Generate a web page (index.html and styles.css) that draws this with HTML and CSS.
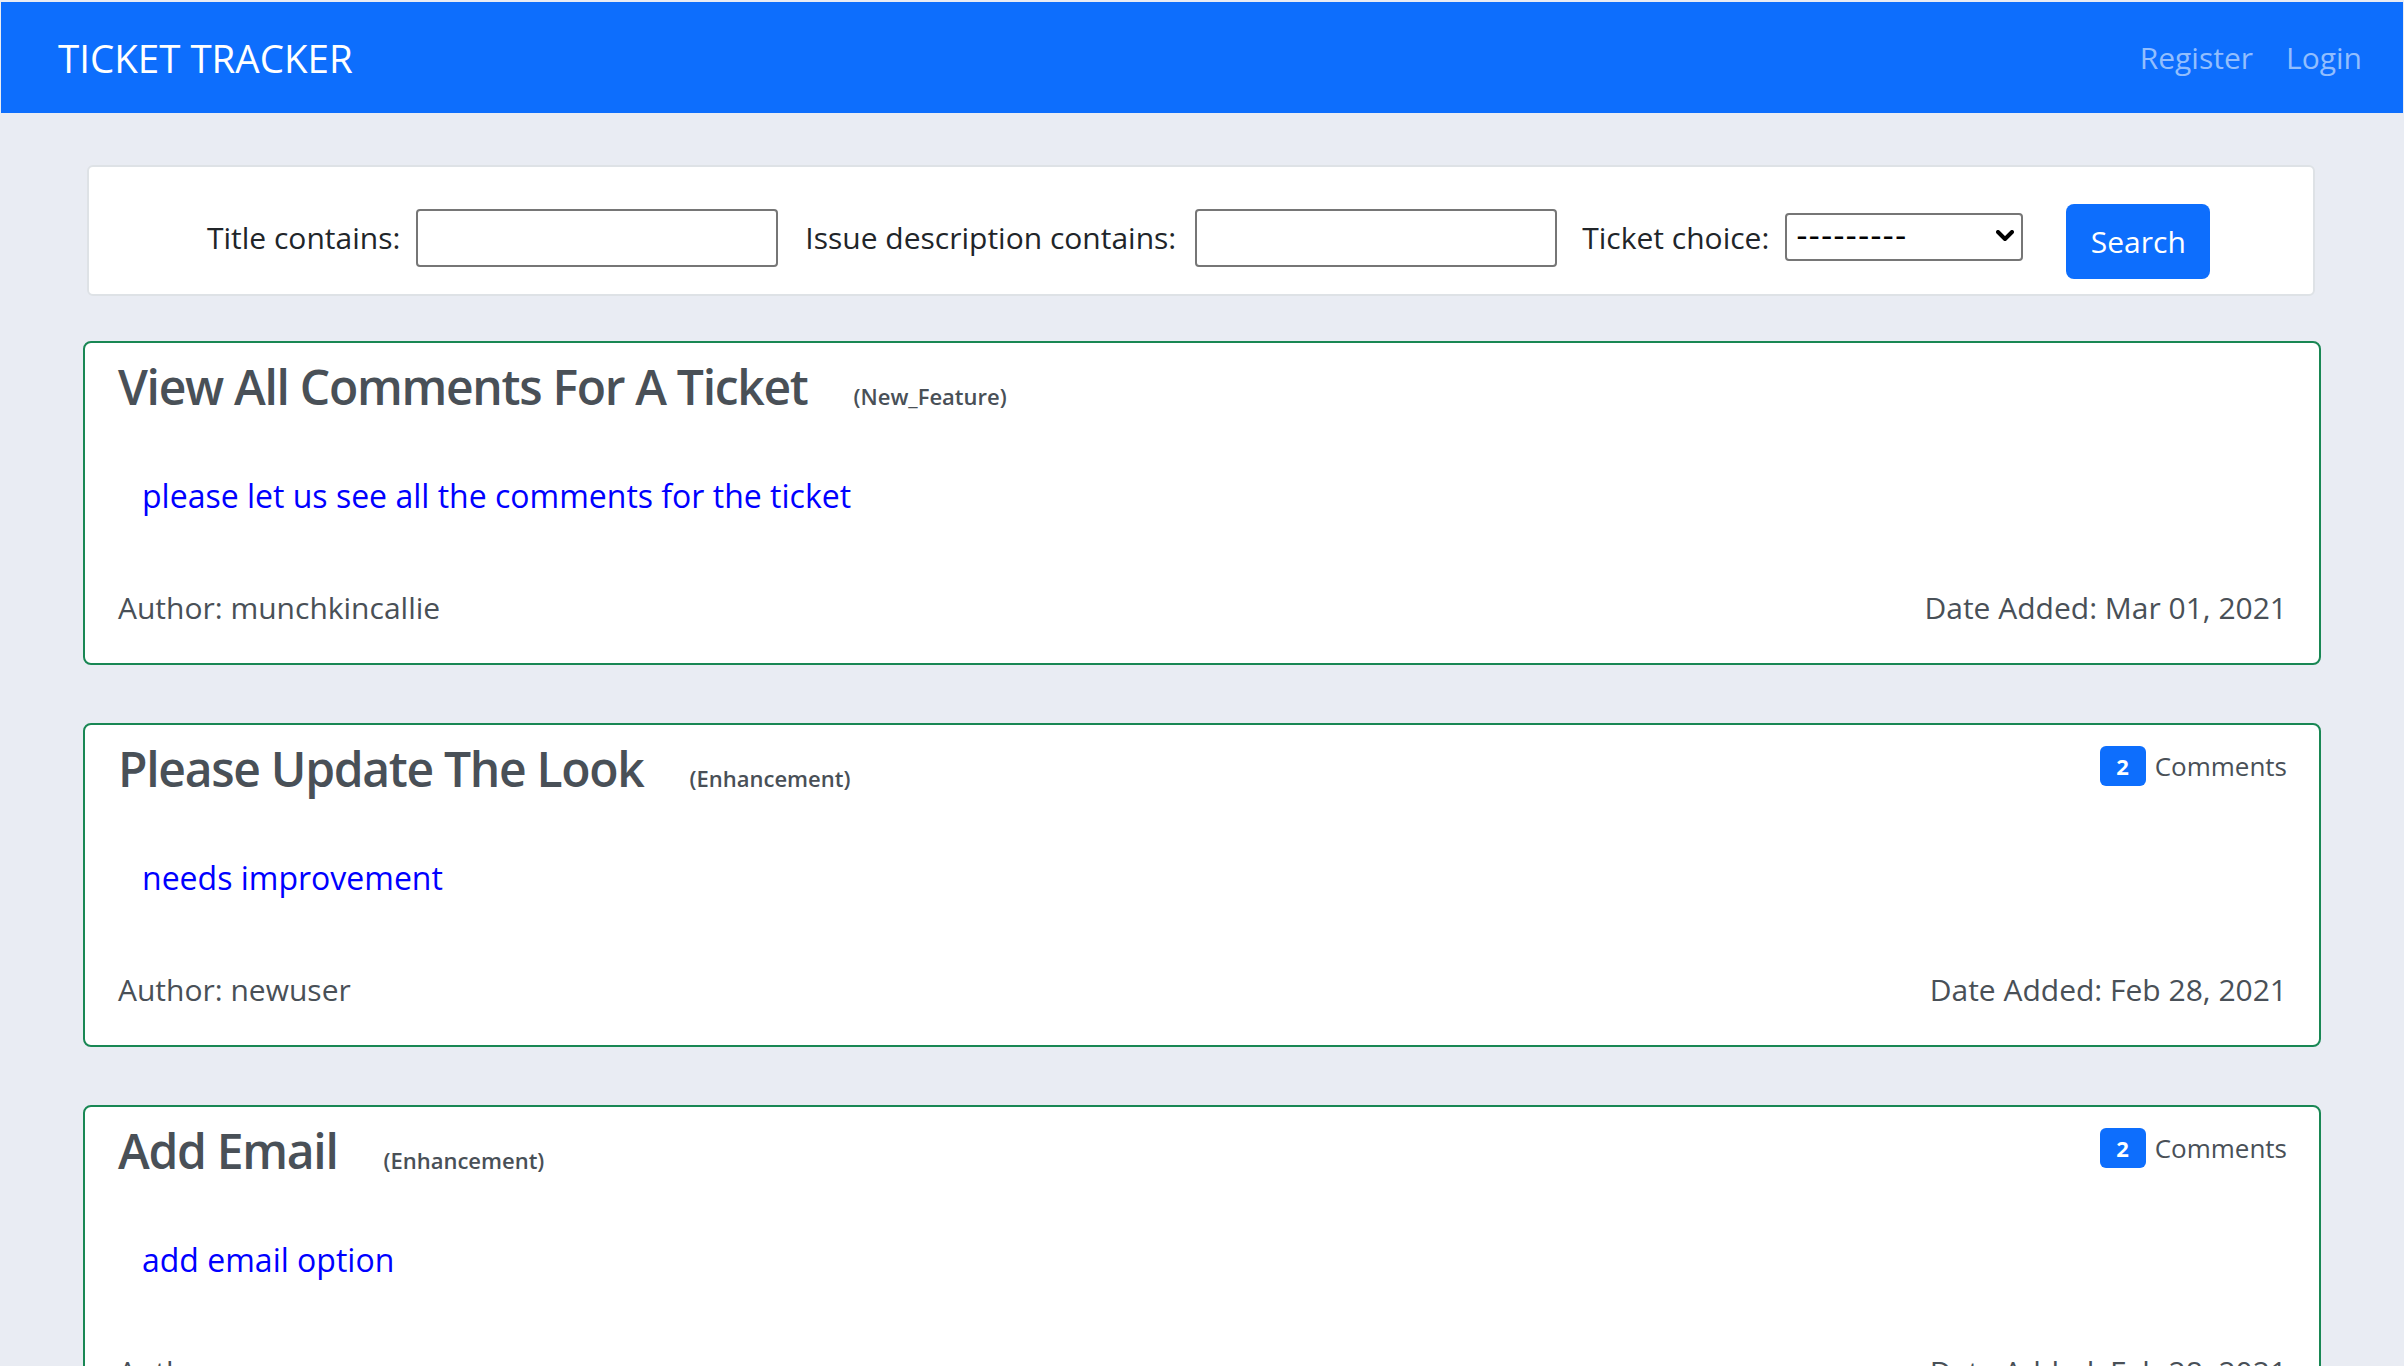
FILE: index.html
```html
<!DOCTYPE html>
<html lang="en">
<head>
<meta charset="utf-8">
<title>Ticket Tracker</title>
<link rel="stylesheet" href="styles.css">
</head>
<body>
<nav class="navbar">
  <a class="brand" href="#">TICKET TRACKER</a>
  <div class="nav-links">
    <a class="nav-link" href="#">Register</a>
    <a class="nav-link" href="#">Login</a>
  </div>
</nav>

<main class="container">
  <form class="filter-card">
    <label class="f-label" for="t">Title contains:</label>
    <input class="f-input f-input-1" id="t" type="text">
    <label class="f-label" for="d">Issue description contains:</label>
    <input class="f-input f-input-2" id="d" type="text">
    <label class="f-label" for="c">Ticket choice:</label>
    <span class="select-wrap">
      <select class="f-select" id="c"><option>---------</option></select>
      <svg class="chev" width="18" height="12" viewBox="0 0 18 12"><polyline points="2,2 9,9 16,2" fill="none" stroke="#000" stroke-width="4" stroke-linecap="round" stroke-linejoin="round"/></svg>
    </span>
    <button class="btn-search" type="button">Search</button>
  </form>

  <article class="ticket">
    <div class="ticket-head">
      <h2 class="ticket-title">View All Comments For A Ticket<span class="ticket-type">(New_Feature)</span></h2>
    </div>
    <p class="ticket-desc">please let us see all the comments for the ticket</p>
    <div class="ticket-foot">
      <span>Author: munchkincallie</span>
      <span>Date Added: Mar 01, 2021</span>
    </div>
  </article>

  <article class="ticket">
    <div class="ticket-head">
      <h2 class="ticket-title">Please Update The Look<span class="ticket-type">(Enhancement)</span></h2>
      <div class="comments"><span class="badge">2</span><span class="comments-text">Comments</span></div>
    </div>
    <p class="ticket-desc">needs improvement</p>
    <div class="ticket-foot">
      <span>Author: newuser</span>
      <span>Date Added: Feb 28, 2021</span>
    </div>
  </article>

  <article class="ticket">
    <div class="ticket-head">
      <h2 class="ticket-title">Add Email<span class="ticket-type">(Enhancement)</span></h2>
      <div class="comments"><span class="badge">2</span><span class="comments-text">Comments</span></div>
    </div>
    <p class="ticket-desc">add email option</p>
    <div class="ticket-foot">
      <span>Author: newuser</span>
      <span>Date Added: Feb 28, 2021</span>
    </div>
  </article>
</main>
</body>
</html>
```

FILE: styles.css
```css
* { box-sizing: border-box; }

html, body {
  margin: 0;
  padding: 0;
}

body {
  background: #e9ecf3;
  font-family: "Open Sans", "Noto Sans", sans-serif;
  color: #212529;
  padding-top: 2px;
}

.navbar {
  margin: 0 1px 0 1px;
  height: 111px;
  background: #0d6efd;
  display: flex;
  align-items: center;
  justify-content: space-between;
  padding: 0 41px 0 57px;
}

.brand {
  color: #fff;
  text-decoration: none;
  font-size: 38.5px;
  line-height: 52px;
}

.nav-links {
  display: flex;
  gap: 33px;
}

.nav-link {
  color: #92befe;
  text-decoration: none;
  font-size: 30px;
  line-height: 40px;
}

.container {
  padding: 52px 83px 0 83px;
}

.filter-card {
  margin: 0 6px 45px 4px;
  background: #fff;
  border: 2px solid #dee2e6;
  border-radius: 6px;
  display: flex;
  align-items: flex-start;
  padding: 37px 0 15px 118px;
}

.f-label {
  font-size: 30px;
  line-height: 40px;
  margin-top: 14px;
  color: #212529;
}

.f-input {
  width: 362px;
  height: 58px;
  margin-top: 5px;
  border: 2px solid #767676;
  border-radius: 4px;
  background: #fff;
  font-size: 28px;
}

.f-input-1 { margin-left: 16px; margin-right: 27px; }
.f-input-2 { margin-left: 19px; margin-right: 25px; }

.select-wrap {
  position: relative;
  display: block;
  margin-left: 16px;
  margin-top: 9px;
  margin-right: 43px;
}

.f-select {
  -webkit-appearance: none;
  appearance: none;
  display: block;
  width: 238px;
  height: 48px;
  border: 2px solid #767676;
  border-radius: 4px;
  background: #fff;
  color: #000;
  font-family: "Liberation Sans", sans-serif;
  font-size: 34px;
  letter-spacing: 1px;
  line-height: 40px;
  padding: 0 0 4px 9px;
}

.chev {
  position: absolute;
  right: 9px;
  top: 17px;
}

.btn-search {
  width: 144px;
  height: 75px;
  border: 0;
  border-radius: 8px;
  background: #0d6efd;
  color: #fff;
  font-family: "Open Sans", "Noto Sans", sans-serif;
  font-size: 30px;
  padding: 0;
}

.ticket {
  background: #fff;
  border: 2px solid #198754;
  border-radius: 8px;
  padding: 15px 32px 35px 33px;
  margin-bottom: 58px;
  color: #495057;
}

.ticket-head {
  display: flex;
  align-items: flex-start;
  justify-content: space-between;
  height: 58px;
}

.ticket-title {
  margin: 0;
  font-size: 48px;
  line-height: 58px;
  font-weight: 600;
  letter-spacing: -1.3px;
  color: #495057;
}

.ticket-type {
  font-size: 22px;
  line-height: 24px;
  font-weight: 600;
  letter-spacing: 0;
  margin-left: 46px;
}

.comments {
  display: flex;
  align-items: center;
  height: 40px;
  margin-top: 6px;
}

.badge {
  width: 46px;
  height: 40px;
  border-radius: 6px;
  background: #0d6efd;
  color: #fff;
  font-size: 22px;
  font-weight: 700;
  display: flex;
  align-items: center;
  justify-content: center;
}

.comments-text {
  margin-left: 9px;
  font-size: 26px;
  line-height: 36px;
  color: #495057;
}

.ticket-desc {
  margin: 58px 0 0 0;
  padding-left: 24px;
  font-size: 32px;
  line-height: 44px;
  color: #0000ff;
}

.ticket-foot {
  margin-top: 70px;
  display: flex;
  justify-content: space-between;
  font-size: 30px;
  line-height: 40px;
  color: #495057;
}
```
